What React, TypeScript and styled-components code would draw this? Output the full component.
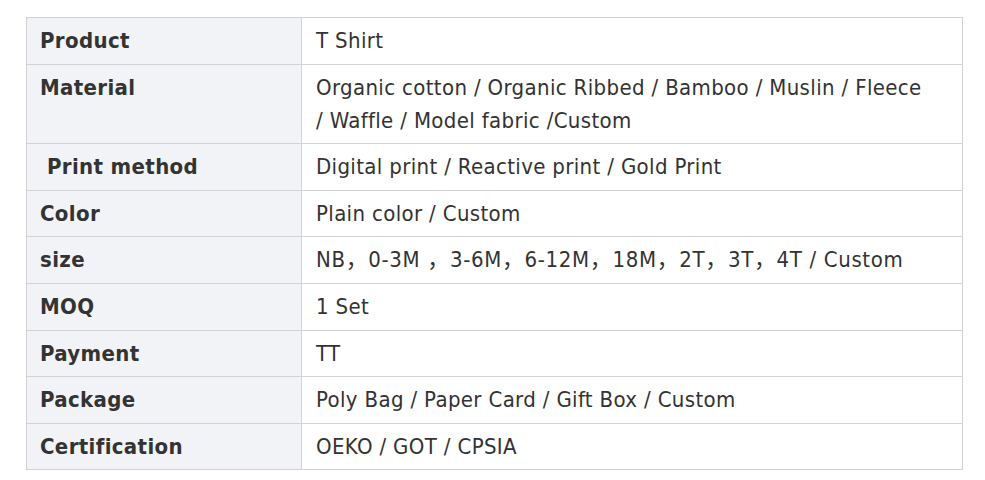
import React from 'react';
import styled, { createGlobalStyle } from 'styled-components';

/// Data
type SpecRow = { label: string; value: string; indent?: boolean };

const ROWS: SpecRow[] = [
  { label: 'Product', value: 'T Shirt' },
  { label: 'Material', value: 'Organic cotton / Organic Ribbed / Bamboo / Muslin / Fleece /\u00a0Waffle / Model fabric /Custom' },
  { label: 'Print method', value: 'Digital print / Reactive print / Gold Print', indent: true },
  { label: 'Color', value: 'Plain color / Custom' },
  { label: 'size', value: 'NB，0-3M ，3-6M，6-12M，18M，2T，3T，4T / Custom' },
  { label: 'MOQ', value: '1 Set' },
  { label: 'Payment', value: 'TT' },
  { label: 'Package', value: 'Poly Bag / Paper Card / Gift Box / Custom' },
  { label: 'Certification', value: 'OEKO / GOT / CPSIA' },
];

/// Styles
const GlobalStyle = createGlobalStyle`
  body {
    margin: 0;
    background: #fff;
    font-family: "DejaVu Sans Condensed", "DejaVu Sans", "Noto Sans CJK SC", sans-serif;
    color: #333;
  }
`;

const Page = styled.div`
  padding: 17px 0 0 26px;
`;

const SpecTable = styled.table`
  width: 937px;
  border-collapse: collapse;
  table-layout: fixed;
  font-size: 22px;
  line-height: 33px;
  letter-spacing: 0.35px;
`;

const LabelCell = styled.th<{ $indent?: boolean }>`
  width: 275px;
  box-sizing: border-box;
  padding: 6px 13px 6.6px ${ p => p.$indent ? 20 : 13 }px;
  background: #f2f3f7;
  border: 1px solid #d2d2d2;
  text-align: left;
  vertical-align: top;
  font-weight: bold;
  color: #333;
`;

const ValueCell = styled.td<{ $wide?: boolean }>`
  padding: 6px 14px 6.6px;
  border: 1px solid #d2d2d2;
  vertical-align: top;
  color: #333;
  letter-spacing: ${ p => p.$wide ? 0.65 : 0.35 }px;
`;

export default function App() {
  return (
    <Page>
      <GlobalStyle/>
      <SpecTable>
        <tbody>
        { ROWS.map(row => (
          <tr key={ row.label }>
            <LabelCell $indent={ row.indent }>{ row.label }</LabelCell>
            <ValueCell $wide={ row.label === 'size' }>{ row.value }</ValueCell>
          </tr>
        )) }
        </tbody>
      </SpecTable>
    </Page>
  );
}
